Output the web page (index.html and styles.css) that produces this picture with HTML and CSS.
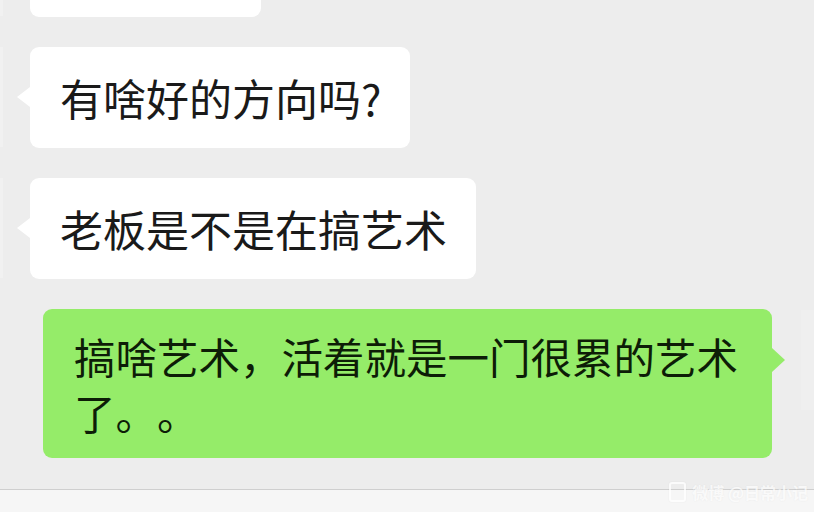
FILE: index.html
```html
<!DOCTYPE html>
<html lang="zh-CN">
<head>
    <meta charset="UTF-8">
    <meta name="viewport" content="width=device-width, initial-scale=1.0">
    <title>聊天</title>
    <link rel="stylesheet" href="styles.css">
</head>
<body>
    <div class="chat">
        <div class="messages">
            <div class="row">
                <div class="avatar"></div>
                <div class="bubble">好的谢谢</div>
            </div>
            <div class="row">
                <div class="avatar"></div>
                <div class="bubble">有啥好的方向吗?</div>
            </div>
            <div class="row">
                <div class="avatar"></div>
                <div class="bubble">老板是不是在搞艺术</div>
            </div>
            <div class="row self">
                <div class="bubble">搞啥艺术，活着就是一门很累的艺术了。。</div>
                <div class="avatar"></div>
            </div>
        </div>
    </div>
    <div class="input-bar">
        <span class="watermark"><span class="wm-icon"></span>微博 @日常小记</span>
    </div>
</body>
</html>
```

FILE: styles.css
```css
html, body {
    margin: 0;
    height: 100%;
}
body {
    font-family: "Noto Sans CJK SC", "Noto Sans", sans-serif;
    background-color: #ededed;
    display: flex;
    flex-direction: column;
    overflow: hidden;
}
.chat {
    flex: 1;
    overflow: hidden;
    display: flex;
    flex-direction: column;
    justify-content: flex-end;
}
.messages {
    display: flex;
    flex-direction: column;
    gap: 30px;
    padding-bottom: 31px;
}
.row {
    display: flex;
    align-items: flex-start;
}
.row .avatar {
    width: 3px;
    height: 100px;
    background-color: #f1f1f1;
    flex-shrink: 0;
}
.bubble {
    position: relative;
    box-sizing: border-box;
    min-height: 101px;
    margin-left: 27px;
    padding: 22px 29px 22px 30px;
    display: flex;
    align-items: center;
    background-color: #fff;
    border-radius: 9px;
    color: #1a1a1a;
    font-size: 43px;
    line-height: 57px;
    text-spacing-trim: space-all;
}
.bubble::before {
    content: "";
    position: absolute;
    left: -13px;
    top: 40px;
    border-top: 10px solid transparent;
    border-bottom: 10px solid transparent;
    border-right: 13px solid #fff;
}
.row.self {
    justify-content: flex-end;
}
.row.self .bubble {
    margin-left: 0;
    margin-right: 29px;
    max-width: 729px;
    padding: 19px 28px 18px 31px;
    background-color: #95ec69;
    color: #0d1d07;
    font-size: 41.5px;
    line-height: 56px;
}
.row.self .bubble::before {
    left: auto;
    right: -13px;
    top: 39px;
    border-top-width: 12px;
    border-bottom-width: 12px;
    border-right: none;
    border-left: 13px solid #95ec69;
}
.row.self .avatar {
    width: 13px;
    margin-top: 1px;
    background-color: #efefef;
}
.input-bar {
    height: 22px;
    flex-shrink: 0;
    border-top: 1px solid #cfcfcf;
    background-color: #f6f6f6;
    display: flex;
    justify-content: flex-end;
    align-items: flex-start;
}
.watermark {
    display: flex;
    align-items: center;
    gap: 6px;
    margin: -10px 6px 0 0;
    font-size: 16px;
    font-weight: bold;
    color: rgba(255, 255, 255, 0.75);
    text-shadow: 0 0 2px rgba(0, 0, 0, 0.06);
}
.wm-icon {
    width: 13px;
    height: 16px;
    border: 2px solid rgba(255, 255, 255, 0.75);
    border-radius: 3px;
    box-shadow: 0 0 2px rgba(0, 0, 0, 0.06);
}
```
